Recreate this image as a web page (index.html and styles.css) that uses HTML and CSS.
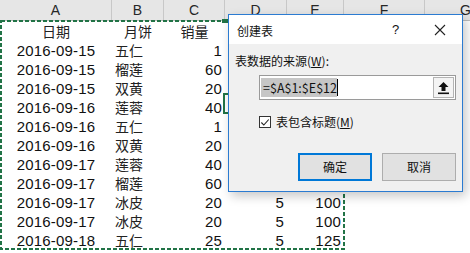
FILE: index.html
```html
<!DOCTYPE html>
<html lang="zh">
<head>
<meta charset="utf-8">
<link rel="stylesheet" href="styles.css">
</head>
<body>
<div class="sheet">
  <div class="colheads">
    <div class="ch w-a">A</div>
    <div class="ch w-b">B</div>
    <div class="ch w-c">C</div>
    <div class="ch w-d">D</div>
    <div class="ch w-e">E</div>
    <div class="ch w-f">F</div>
    <div class="ch w-g">G</div>
  </div>
  <div class="grid">
    <div class="c ctr cjk">日期</div><div class="c ctr cjk">月饼</div><div class="c ctr cjk">销量</div><div class="c"></div><div class="c"></div>
    <div class="c ctr">2016-09-15</div><div class="c left cjk">五仁</div><div class="c right">1</div><div class="c"></div><div class="c"></div>
    <div class="c ctr">2016-09-15</div><div class="c left cjk">榴莲</div><div class="c right">60</div><div class="c"></div><div class="c"></div>
    <div class="c ctr">2016-09-15</div><div class="c left cjk">双黄</div><div class="c right">20</div><div class="c"></div><div class="c"></div>
    <div class="c ctr">2016-09-16</div><div class="c left cjk">莲蓉</div><div class="c right">40</div><div class="c"></div><div class="c"></div>
    <div class="c ctr">2016-09-16</div><div class="c left cjk">五仁</div><div class="c right">1</div><div class="c"></div><div class="c"></div>
    <div class="c ctr">2016-09-16</div><div class="c left cjk">双黄</div><div class="c right">20</div><div class="c"></div><div class="c"></div>
    <div class="c ctr">2016-09-17</div><div class="c left cjk">莲蓉</div><div class="c right">40</div><div class="c"></div><div class="c"></div>
    <div class="c ctr">2016-09-17</div><div class="c left cjk">榴莲</div><div class="c right">60</div><div class="c"></div><div class="c"></div>
    <div class="c ctr">2016-09-17</div><div class="c left cjk">冰皮</div><div class="c right">20</div><div class="c right">5</div><div class="c right">100</div>
    <div class="c ctr">2016-09-17</div><div class="c left cjk">冰皮</div><div class="c right">20</div><div class="c right">5</div><div class="c right">100</div>
    <div class="c ctr">2016-09-18</div><div class="c left cjk">五仁</div><div class="c right">25</div><div class="c right">5</div><div class="c right">125</div>
  </div>

  <svg class="marquee" width="346" height="231" viewBox="0 0 346 231">
    <rect x="1" y="1" width="343" height="228" fill="none" stroke="#217346" stroke-width="2" stroke-dasharray="4 2"/>
  </svg>
  <div class="active-cell"></div>
  <div class="fill-handle"></div>

  <div class="dialog">
    <div class="titlebar">
      <span class="title">创建表</span>
      <span class="help">?</span>
      <svg class="close" width="12" height="12" viewBox="0 0 12 12"><path d="M1 1L11 11M11 1L1 11" stroke="#222" stroke-width="1.1"/></svg>
    </div>
    <div class="body">
      <div class="label">表数据的来源(<u>W</u>):</div>
      <div class="range">
        <div class="range-input"><span class="sel">=$A$1:$E$12</span><span class="caret"></span></div>
        <div class="range-btn">
          <svg width="13" height="14" viewBox="0 0 13 14"><path d="M6.5 1L1.5 6H4.5V10H8.5V6H11.5Z" fill="#111"/><rect x="1" y="11.5" width="11" height="1.6" fill="#111"/></svg>
        </div>
      </div>
      <label class="check">
        <span class="box"><svg width="11" height="11" viewBox="0 0 11 11"><path d="M1.5 5.5L4.2 8.3L9.6 2.2" fill="none" stroke="#222" stroke-width="1.2"/></svg></span>
        <span>表包含标题(<u>M</u>)</span>
      </label>
      <div class="buttons">
        <div class="btn primary">确定</div>
        <div class="btn">取消</div>
      </div>
    </div>
  </div>
</div>
</body>
</html>
```

FILE: styles.css
```css
html, body {
  margin: 0;
  padding: 0;
  background: #fff;
  overflow: hidden;
}
.sheet {
  position: relative;
  width: 470px;
  height: 253px;
  overflow: hidden;
  font-family: "Liberation Sans", "Noto Sans CJK SC", sans-serif;
  color: #111;
}
.colheads {
  display: flex;
  height: 20px;
  background: #e6e6e6;
  border-bottom: 1px solid #bcbcbc;
  overflow: hidden;
}
.ch {
  flex: none;
  box-sizing: border-box;
  border-right: 1px solid #c8c8c8;
  text-align: center;
  font-size: 14px;
  line-height: 21px;
  color: #262626;
}
.w-a { width: 112px; }
.w-b { width: 52px; }
.w-c { width: 61px; }
.w-d { width: 62px; }
.w-e { width: 57px; }
.w-f { width: 81px; }
.w-g { width: 45px; text-align: left; padding-left: 35px; border-right: none; }
.grid {
  display: grid;
  grid-template-columns: 112px 52px 61px 62px 57px;
  grid-auto-rows: 19px;
}
.c {
  font-size: 15px;
  line-height: 21px;
  letter-spacing: 0.2px;
  white-space: nowrap;
  overflow: hidden;
  padding: 0 3px;
}
.cjk { font-family: "Noto Sans CJK SC", sans-serif; font-size: 14px; line-height: 21px; letter-spacing: 0; color: #222; }
.ctr { text-align: center; }
.left { text-align: left; }
.right { text-align: right; }
.marquee {
  position: absolute;
  left: 0;
  top: 20px;
}
.active-cell {
  position: absolute;
  left: 223px;
  top: 93px;
  width: 10px;
  height: 21px;
  box-sizing: border-box;
  border: 2px solid #217346;
}
.fill-handle {
  position: absolute;
  left: 222px;
  top: 19px;
  width: 6px;
  height: 4px;
  background: #217346;
}
.dialog {
  position: absolute;
  left: 228px;
  top: 14px;
  width: 235px;
  height: 178px;
  box-sizing: border-box;
  border: 1px solid #2b7bd1;
  background: #f0f0f0;
  box-shadow: 3px 4px 10px rgba(0,0,0,0.22);
  font-family: "Noto Sans CJK SC", sans-serif;
  font-size: 12px;
  color: #111;
}
.titlebar {
  height: 29px;
  background: #fff;
  display: flex;
  align-items: center;
  padding-left: 8px;
}
.title { flex: 1; line-height: 29px; padding-top: 2px; }
.help { width: 12px; font-family: "Liberation Sans", sans-serif; font-size: 13px; margin-right: 30px; }
.close { margin-right: 16px; }
.body {
  padding: 8px 0 0 6px;
}
.label { line-height: 17px; height: 17px; }
.range {
  display: flex;
  margin: 6px 0 0 24px;
  width: 197px;
  height: 25px;
  box-sizing: border-box;
  border: 1px solid #9a9a9a;
  background: #fff;
}
.range-input {
  flex: 1;
  display: flex;
  align-items: center;
  padding-left: 1px;
}
.sel {
  background: #c6c6c6;
  line-height: 19px;
  font-size: 12.5px;
  padding: 0 0 0 2px;
  color: #111;
}
.caret { width: 1px; height: 17px; background: #000; }
.range-btn {
  width: 19px;
  border: 1px solid #b4b4b4;
  margin: 1px;
  background: #f4f4f4;
  display: flex;
  align-items: center;
  justify-content: center;
}
.check {
  display: flex;
  align-items: center;
  margin: 15px 0 0 24px;
  line-height: 14px;
}
.box {
  width: 12px;
  height: 12px;
  box-sizing: border-box;
  border: 1px solid #333;
  background: #fff;
  display: flex;
  align-items: center;
  justify-content: center;
  margin-right: 5px;
}
.buttons {
  display: flex;
  gap: 10px;
  margin: 24px 0 0 63px;
}
.btn {
  width: 74px;
  height: 28px;
  box-sizing: border-box;
  border: 1px solid #adadad;
  background: #e1e1e1;
  text-align: center;
  line-height: 26px;
}
.btn.primary {
  border: 2px solid #0078d7;
  line-height: 24px;
}
```
